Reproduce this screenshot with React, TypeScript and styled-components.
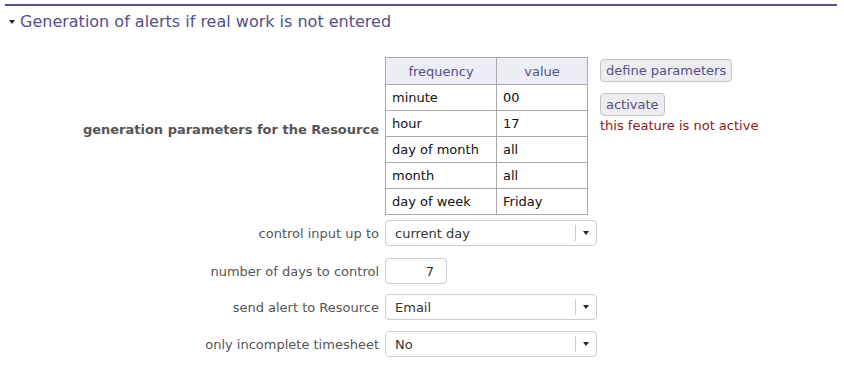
import { createGlobalStyle } from 'styled-components';
import styled from 'styled-components';

const Global = createGlobalStyle`
    html, body {
        margin: 0;
        padding: 0;
        background: #ffffff;
    }
    body {
        font-family: 'DejaVu Sans', Verdana, sans-serif;
        font-size: 13px;
        color: #333333;
    }
`;

const Page = styled.div`
    width: 844px;
    height: 369px;
    padding: 4px 7px 0 5px;
    box-sizing: border-box;
`;

const SectionHeader = styled.div`
    border-top: 2px solid #545089;
    display: flex;
    align-items: center;
    gap: 5px;
    padding: 2px 0 0 4px;
    height: 26px;
    color: #545089;
    font-size: 16px;
`;

const Caret = styled.span`
    width: 0;
    height: 0;
    border-left: 3px solid transparent;
    border-right: 3px solid transparent;
    border-top: 4px solid #222222;
    margin-top: 2px;
`;

const Form = styled.div`
    display: flex;
    flex-direction: column;
    margin-top: 23px;
`;

const Row = styled.div<{ $gap: number }>`
    display: flex;
    align-items: center;
    gap: 6px;
    margin-bottom: ${p => p.$gap}px;
`;

const Label = styled.div<{ $bold?: boolean; $lift?: number }>`
    width: 374px;
    flex-shrink: 0;
    text-align: right;
    color: #555555;
    font-weight: ${p => (p.$bold ? 700 : 400)};
    margin-bottom: ${p => p.$lift ?? 0}px;
`;

const Field = styled.div`
    display: flex;
    align-items: flex-start;
`;

const Table = styled.table`
    border-collapse: collapse;
    width: 203px;
    font-size: 13px;

    th, td {
        border: 1px solid #aaaaaa;
        height: 25px;
        padding: 0 6px;
        text-align: left;
    }
    th {
        background: #ededf5;
        color: #545089;
        font-weight: 400;
        text-align: center;
        height: 26px;
    }
    td {
        color: #111111;
    }
    td:first-child, th:first-child {
        width: 98px;
    }
`;

const Side = styled.div`
    display: flex;
    flex-direction: column;
    align-items: flex-start;
    margin-left: 12px;
    padding-top: 2px;
`;

const Button = styled.button`
    font-family: inherit;
    font-size: 13px;
    color: #545089;
    background: #ededf0;
    border: 1px solid #c2c2c8;
    border-radius: 4px;
    height: 23px;
    padding: 0 5px;
    margin-bottom: 11px;
    cursor: pointer;
`;

const Warning = styled.div`
    color: #8b1a1a;
    margin-top: -9px;
`;

const Select = styled.div<{ $width: number }>`
    width: ${p => p.$width}px;
    height: 26px;
    box-sizing: border-box;
    border: 1px solid #cccccc;
    border-radius: 4px;
    display: flex;
    align-items: center;
    color: #333333;
`;

const SelectText = styled.span`
    flex: 1;
    padding-left: 9px;
`;

const SelectArrow = styled.span`
    width: 20px;
    height: 16px;
    border-left: 1px solid #cccccc;
    display: flex;
    align-items: center;
    justify-content: center;

    &::after {
        content: '';
        border-left: 3px solid transparent;
        border-right: 3px solid transparent;
        border-top: 4px solid #222222;
    }
`;

const NumberBox = styled.div`
    width: 62px;
    height: 26px;
    box-sizing: border-box;
    border: 1px solid #cccccc;
    border-radius: 4px;
    display: flex;
    align-items: center;
    justify-content: flex-end;
    padding-right: 12px;
    color: #333333;
`;

const rows: [string, string][] = [
    ['minute', '00'],
    ['hour', '17'],
    ['day of month', 'all'],
    ['month', 'all'],
    ['day of week', 'Friday'],
];

const DropDown = ({ value }: { value: string }) => (
    <Select $width={212}>
        <SelectText>{value}</SelectText>
        <SelectArrow />
    </Select>
);

export default function App() {
    return (
        <Page>
            <Global />
            <SectionHeader>
                <Caret />
                Generation of alerts if real work is not entered
            </SectionHeader>
            <Form>
                <Row $gap={5}>
                    <Label $bold $lift={13}>generation parameters for the Resource</Label>
                    <Field>
                        <Table>
                            <thead>
                                <tr>
                                    <th>frequency</th>
                                    <th>value</th>
                                </tr>
                            </thead>
                            <tbody>
                                {rows.map(([k, v]) => (
                                    <tr key={k}>
                                        <td>{k}</td>
                                        <td>{v}</td>
                                    </tr>
                                ))}
                            </tbody>
                        </Table>
                        <Side>
                            <Button>define parameters</Button>
                            <Button>activate</Button>
                            <Warning>this feature is not active</Warning>
                        </Side>
                    </Field>
                </Row>

                <Row $gap={12}>
                    <Label>control input up to</Label>
                    <DropDown value="current day" />
                </Row>

                <Row $gap={10}>
                    <Label>number of days to control</Label>
                    <NumberBox>7</NumberBox>
                </Row>

                <Row $gap={11}>
                    <Label>send alert to Resource</Label>
                    <DropDown value="Email" />
                </Row>

                <Row $gap={0}>
                    <Label>only incomplete timesheet</Label>
                    <DropDown value="No" />
                </Row>
            </Form>
        </Page>
    );
}
